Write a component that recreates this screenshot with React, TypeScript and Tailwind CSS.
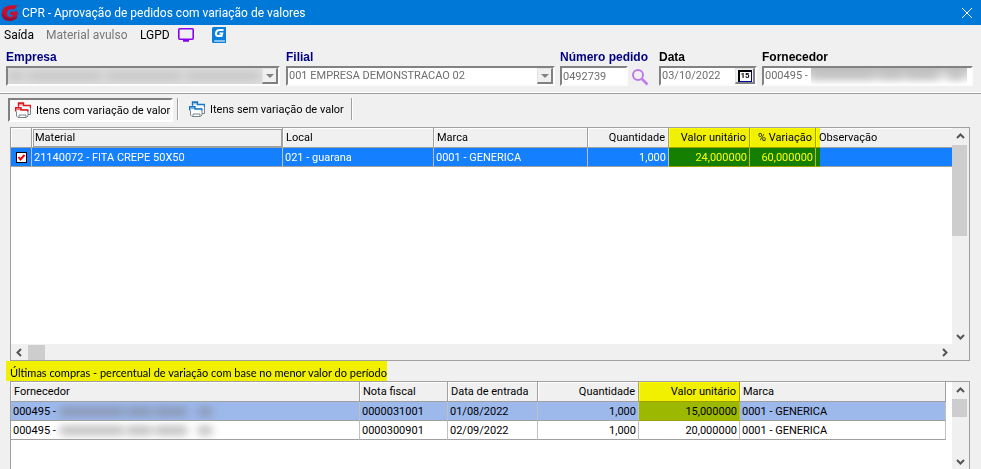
import React from "react";

const sans = "font-[Roboto,Arial,sans-serif]";
const labelClass = "h-[14px] font-['Liberation_Sans',Arial,sans-serif] text-[12px] font-bold leading-[14px] whitespace-nowrap";
const sunken =
  "border-2 border-t-[#828282] border-l-[#828282] border-r-[#fcfcfc] border-b-[#fcfcfc] h-[20px] text-[#6d6d6d]";
const raised =
  "border-t border-l border-r-2 border-b-2 border-t-[#e3e3e3] border-l-[#e3e3e3] border-r-[#808080] border-b-[#808080] bg-[#f0f0f0]";

function LogoG() {
  return (
    <svg viewBox="0 0 18 18" className="h-[18px] w-[18px]" aria-hidden="true">
      <path
        d="M16.500 1.500 L13.500 5.500 C10 4.500 6.500 5.500 6 8.500 C5.600 12 8.500 13.500 11.500 12.500 L12 11 H8.500 L10 7.500 H17 L15.500 14.500 C11 18 5 17.500 2 14 C-.5 10 1 4.500 5 2.500 C8.500 .800 13 1 16.500 1.500 Z"
        fill="#c5112f"
      />
      <path d="M2 14 C5 17.500 11 18 15.500 14.500 L16 12 C11 15.500 5 14.500 1 9 C.8 11 1 12.500 2 14Z" fill="#8e1240" />
    </svg>
  );
}

function Monitor() {
  return (
    <svg viewBox="0 0 16 14" className="h-[14px] w-[16px]" fill="none" aria-hidden="true">
      <rect x=".8" y=".8" width="14.400" height="10.400" rx="1" stroke="#8a00f0" strokeWidth="1.600" />
      <path d="M5 12.500 H11" stroke="#8a00f0" strokeWidth="2.500" />
    </svg>
  );
}

function Book() {
  return (
    <svg viewBox="0 0 14 16" className="h-[16px] w-[14px]" aria-hidden="true">
      <path d="M1.500 0 H14 V16 H1.500 Q0 16 0 14.500 V1.500 Q0 0 1.500 0Z" fill="#0a80dc" />
      <path d="M2.500 13.500 H13 V14.600 H2.500 Q1.500 14 2.500 13.500Z" fill="#fff" />
      <path d="M11.500 3 H7.500 Q4.500 3 4 6 Q3.500 9 6.500 9 H9.500 L10.200 6.500 H7.500" fill="none" stroke="#fff" strokeWidth="2" />
    </svg>
  );
}

function Folders({ color }: { color: string }) {
  return (
    <svg viewBox="0 0 16 16" className="h-[16px] w-[16px] shrink-0" fill="none" aria-hidden="true">
      <path d="M3.500 5 V1.500 H8.500 V3.500 H15.500 V12.500 H13" fill="#f4fafc" stroke="#78858d" />
      <path d="M3 1 H8.500 V3.500 H3 Z" fill={color} fillOpacity=".4" />
      <path d="M3.500 4.500 V1 H8.500 V3.500 H15.500 V6" stroke={color} strokeWidth="1.400" />
      <path d="M1.500 8 V14 L3 15.500 H11.500 L13 14 V8Z" fill="#fff" stroke="#78858d" />
      <path d="M4 15 V13 H11 V15" stroke="#78858d" />
      <path d="M.7 9.500 V5.700 H6 V8 H12.700 V9.500" fill="#fff" stroke={color} strokeWidth="1.400" />
      <path d="M1.500 7.300 H6" stroke={color} strokeOpacity=".6" strokeWidth="1.500" />
    </svg>
  );
}

type Dir = "up" | "down" | "left" | "right";

function ScrollButton({ dir, label }: { dir: Dir; label: string }) {
  const d = {
    up: "M1 6 L4.500 2.500 L8 6",
    down: "M1 3 L4.500 6.500 L8 3",
    left: "M6 1 L2.500 4.500 L6 8",
    right: "M3 1 L6.500 4.500 L3 8",
  }[dir];
  return (
    <button type="button" aria-label={label} className="flex h-[16px] w-[16px] shrink-0 items-center justify-center">
      <svg viewBox="0 0 9 9" className="h-[9px] w-[9px]" fill="none" stroke="#555" strokeWidth="2" aria-hidden="true">
        <path d={d} />
      </svg>
    </button>
  );
}

function Redacted({ tone }: { tone: string }) {
  return (
    <span className={`flex h-[9px] gap-[3px] blur-[4px] ${tone}`} aria-hidden="true">
      <span className="w-[64px] bg-[#777]" />
      <span className="w-[25px] bg-[#777]" />
      <span className="w-[32px] bg-[#777]" />
      <span className="ml-[8px] w-[14px] bg-[#777]" />
    </span>
  );
}

function Combo({ id, label, children, className }: { id: string; label: string; children: React.ReactNode; className: string }) {
  return (
    <div className={`flex flex-col gap-[2px] ${className}`}>
      <label htmlFor={id} className={`${labelClass} text-[#000080]`}>{label}</label>
      <div className="relative">
        {children}
        <span className={`pointer-events-none absolute top-[2px] right-[2px] flex h-[16px] w-[16px] items-center justify-center ${raised}`}>
          <svg viewBox="0 0 8 4" className="h-[4px] w-[8px]" aria-hidden="true"><path d="M0 0H8L4 4Z" fill="#828282" /></svg>
        </span>
      </div>
    </div>
  );
}

const selectClass = `block w-full appearance-none rounded-none bg-white pl-[1px] leading-[16px] opacity-100 ${sunken}`;
const th = "h-[20px] border-r border-b border-[#a0a0a0] bg-[#f0f0f0] p-0 px-[3px] pt-[1px] font-normal leading-[18px] shadow-[inset_1px_1px_0_#ffffff] whitespace-nowrap";
const td = "h-[19px] border-r border-b border-r-[#c0c0c0] border-b-[#a0a0a0] p-0 px-[2px] pt-[1px] leading-[17px] whitespace-nowrap";

const purchases = [
  { invoice: "0000031001", date: "01/08/2022", price: "15,000000", row: "bg-[#9db8eb]" },
  { invoice: "0000300901", date: "02/09/2022", price: "20,000000", row: "bg-white" },
];

export default function App() {
  return (
    <div className={`flex h-screen w-full flex-col overflow-hidden bg-[#f0f0f0] text-[11px] text-black ${sans}`}>
      <header className="flex h-[25px] shrink-0 items-center bg-[#0078d7] pl-px text-white">
        <LogoG />
        <h1 className="ml-[3px] flex-1 text-[12px] leading-[24px]">
          CPR - Aprovação de pedidos com variação de valores
        </h1>
        <button type="button" aria-label="Fechar" className="mr-[8px] p-px">
          <svg viewBox="0 0 10 10" className="h-[10px] w-[10px]" stroke="#fff" aria-hidden="true"><path d="M0 0L10 10M10 0L0 10" /></svg>
        </button>
      </header>

      <nav className="flex h-[20px] shrink-0 items-center pl-[4px] text-[12px]">
        <button type="button" className="w-[42px] text-left">Saída</button>
        <button type="button" disabled className="w-[94px] text-left text-[#777]">Material avulso</button>
        <button type="button" className="w-[38px] text-left">LGPD</button>
        <button type="button" aria-label="Monitor" className="w-[34px]"><Monitor /></button>
        <button type="button" aria-label="Ajuda"><Book /></button>
      </nav>

      <form className="flex h-[49px] shrink-0 border-b border-[#a0a0a0] pt-[5px] pr-[8px] pl-[6px] shadow-[inset_0_-1px_0_#fff]">
        <Combo id="empresa" label="Empresa" className="mr-[6px] w-[274px]">
          <select id="empresa" disabled className={selectClass}><option></option></select>
          <span className="absolute inset-y-[2px] right-[18px] left-[2px] flex items-center overflow-hidden bg-[#dedede]" aria-hidden="true">
            <span className="flex h-[8px] gap-[4px] opacity-30 blur-[4px]">
              <span className="w-[16px] bg-[#888]" />
              <span className="w-[74px] bg-[#888]" />
              <span className="w-[76px] bg-[#888]" />
              <span className="w-[74px] bg-[#888]" />
            </span>
          </span>
        </Combo>
        <Combo id="filial" label="Filial" className="mr-[5px] w-[269px]">
          <select id="filial" disabled className={selectClass}><option>001 EMPRESA DEMONSTRACAO 02</option></select>
        </Combo>
        <div className="flex w-[99px] flex-col gap-[2px]">
          <label htmlFor="pedido" className={`${labelClass} text-[#000080]`}>Número pedido</label>
          <div className="flex gap-[3px]">
            <input id="pedido" disabled defaultValue="0492739" className={`w-[68px] bg-white pl-[1px] ${sunken}`} />
            <button type="button" aria-label="Pesquisar" className="pt-[1px]">
              <svg viewBox="0 0 18 18" className="h-[18px] w-[18px]" fill="none" stroke="#bd7be8" strokeWidth="2" aria-hidden="true">
                <circle cx="7" cy="7" r="5" /><path d="M11 11L16.500 16.500" strokeWidth="2.500" />
              </svg>
            </button>
          </div>
        </div>
        <div className="mr-[5px] flex w-[98px] flex-col gap-[2px]">
          <label htmlFor="data" className={labelClass}>Data</label>
          <div className={`flex bg-white ${sunken}`}>
            <input id="data" disabled defaultValue="03/10/2022" className="min-w-0 flex-1 pl-[1px]" />
            <button type="button" aria-label="Calendário" className={`flex w-[20px] items-center justify-center ${raised}`}>
              <span className="flex h-[12px] w-[14px] items-center justify-center border border-t-2 border-l-2 border-black border-r-[#0000a0] border-b-[#0000a0] bg-white text-[8px] leading-[8px] font-bold text-black">15</span>
            </button>
          </div>
        </div>
        <div className="flex min-w-0 flex-1 flex-col gap-[2px]">
          <label htmlFor="fornecedor" className={labelClass}>Fornecedor</label>
          <div className={`flex bg-white ${sunken}`}>
            <input id="fornecedor" disabled defaultValue="000495 -" className="w-[47px] pl-[1px]" />
            <span className="mr-[4px] min-w-0 flex-1 overflow-hidden bg-linear-to-b from-[#c4c4c4] to-white pt-[3px]">
              <Redacted tone="opacity-30" />
            </span>
          </div>
        </div>
      </form>

      <div role="tablist" className="flex h-[33px] shrink-0 items-start pt-[4px] pl-[8px]">
        <button type="button" role="tab" aria-selected="true" className="flex h-[24px] w-[165px] items-center gap-[5px] border-2 border-t-[#808080] border-r-white border-b-white border-l-[#808080] bg-[#f8f8f8] pl-[5px] whitespace-nowrap">
          <Folders color="#e0141e" /> <span className="pt-[2px]">Itens com variação de valor</span>
        </button>
        <span className="mx-[4px] h-[22px] w-[2px] border-l border-[#a0a0a0] bg-white" />
        <button type="button" role="tab" aria-selected="false" className="flex h-[22px] w-[164px] items-center gap-[5px] pl-[6px] whitespace-nowrap">
          <Folders color="#1677c8" /> <span className="pt-[2px]">Itens sem variação de valor</span>
        </button>
        <span className="mx-[4px] h-[22px] w-[2px] border-l border-[#a0a0a0] bg-white" />
      </div>

      <section className="mr-[11px] ml-[10px] flex h-[234px] shrink-0 border border-[#a0a0a0] bg-white">
        <div className="flex min-w-0 flex-1 flex-col">
          <div className="relative flex-1">
            <table className="w-full table-fixed border-separate border-spacing-0">
              <colgroup>
                <col className="w-[21px]" /><col className="w-[251px]" /><col className="w-[151px]" /><col className="w-[154px]" />
                <col className="w-[81px]" /><col className="w-[81px]" /><col className="w-[66px]" /><col />
              </colgroup>
              <thead>
                <tr className="text-left">
                  <th className={th}></th>
                  <th className={`${th} outline outline-[#a0a0a0] -outline-offset-2`}>Material</th>
                  <th className={th}>Local</th>
                  <th className={th}>Marca</th>
                  <th className={`${th} text-right`}>Quantidade</th>
                  <th className={`${th} text-right`}>Valor unitário</th>
                  <th className={`${th} text-right`}>% Variação</th>
                  <th className={`${th} border-r-0`}>Observação</th>
                </tr>
              </thead>
              <tbody>
                <tr className="bg-[#147fff] text-white">
                  <td className={td}>
                    <label className="flex justify-center">
                      <input type="checkbox" defaultChecked aria-label="Selecionar item" className="sr-only" />
                      <svg viewBox="0 0 11 11" className="h-[11px] w-[11px]" fill="#fff" aria-hidden="true">
                        <rect x=".5" y=".5" width="10" height="10" stroke="#000" />
                        <path d="M2.500 5L4.500 7.500L8.500 3" fill="none" stroke="#f00" strokeWidth="2" />
                      </svg>
                    </label>
                  </td>
                  <td className={td}>21140072 - FITA CREPE 50X50</td>
                  <td className={td}>021 - guarana</td>
                  <td className={td}>0001 - GENERICA</td>
                  <td className={`${td} text-right`}>1,000</td>
                  <td className={`${td} text-right`}>24,000000</td>
                  <td className={`${td} text-right`}>60,000000</td>
                  <td className={`${td} border-r-0`}></td>
                </tr>
              </tbody>
            </table>
            <span className="pointer-events-none absolute top-0 left-[658px] h-[39px] w-[151px] bg-[#ffff00] mix-blend-multiply" />
          </div>
          <div className="flex h-[16px] items-center bg-[#f0f0f0]">
            <ScrollButton dir="left" label="Rolar para a esquerda" />
            <span className="ml-px h-[15px] w-[17px] bg-[#cdcdcd]" />
            <span className="flex-1" />
            <ScrollButton dir="right" label="Rolar para a direita" />
          </div>
        </div>
        <div className="flex w-[17px] flex-col bg-[#f0f0f0] pb-[16px]">
          <ScrollButton dir="up" label="Rolar para cima" />
          <span className="mt-px h-[91px] w-[15px] bg-[#cdcdcd]" />
          <span className="flex-1" />
          <ScrollButton dir="down" label="Rolar para baixo" />
        </div>
      </section>

      <h2 className="ml-[6px] h-[20px] w-[381px] shrink-0 bg-[#f0f000] pl-[4px] font-[Lato,sans-serif] leading-[24px] whitespace-nowrap">
        Últimas compras - percentual de variação com base no menor valor do período
      </h2>

      <section className="mr-[11px] ml-[10px] flex min-h-0 flex-1 border border-b-0 border-[#a0a0a0] bg-white">
        <div className="relative mr-[6px] min-w-0 flex-1">
          <table className="w-full table-fixed border-separate border-spacing-0">
            <colgroup>
              <col className="w-[349px]" /><col className="w-[88px]" /><col className="w-[90px]" /><col className="w-[101px]" /><col className="w-[101px]" /><col />
            </colgroup>
            <thead>
              <tr className="text-left">
                <th className={th}>Fornecedor</th>
                <th className={th}>Nota fiscal</th>
                <th className={th}>Data de entrada</th>
                <th className={`${th} text-right`}>Quantidade</th>
                <th className={`${th} text-right`}>Valor unitário</th>
                <th className={th}>Marca</th>
              </tr>
            </thead>
            <tbody>
              {purchases.map((p) => (
                <tr key={p.invoice} className={p.row}>
                  <td className={td}>
                    <span className="flex items-center gap-[4px] overflow-hidden">
                      000495 -
                      <Redacted tone="opacity-50" />
                    </span>
                  </td>
                  <td className={td}>{p.invoice}</td>
                  <td className={td}>{p.date}</td>
                  <td className={`${td} text-right`}>1,000</td>
                  <td className={`${td} text-right`}>{p.price}</td>
                  <td className={td}>0001 - GENERICA</td>
                </tr>
              ))}
            </tbody>
          </table>
          <span className="pointer-events-none absolute top-0 left-[628px] h-[39px] w-[101px] bg-[#ffff00] mix-blend-multiply" />
        </div>
        <div className="flex w-[17px] flex-col bg-[#f0f0f0]">
          <ScrollButton dir="up" label="Rolar para cima" />
          <span className="mt-px h-[18px] w-[15px] bg-[#cdcdcd]" />
          <span className="flex-1" />
          <ScrollButton dir="down" label="Rolar para baixo" />
        </div>
      </section>
    </div>
  );
}
